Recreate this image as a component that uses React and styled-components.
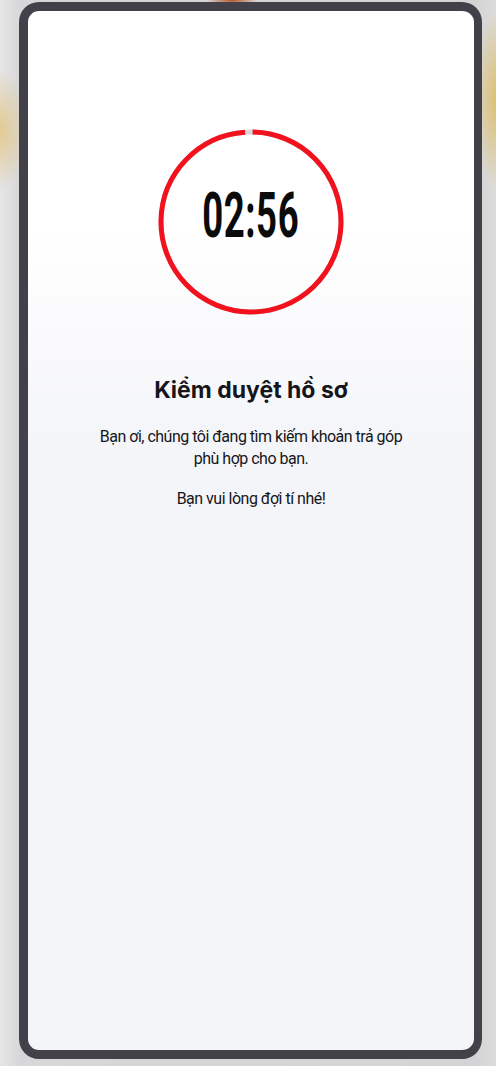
import React from "react";
import styled, { createGlobalStyle } from "styled-components";

const Global = createGlobalStyle`
  html, body {
    margin: 0;
    height: 100%;
  }
  body {
    background:
      radial-gradient(ellipse 30px 60px at 0px 130px, rgba(226, 190, 110, 0.7), transparent),
      radial-gradient(ellipse 22px 90px at 496px 100px, rgba(222, 186, 90, 0.85), transparent),
      radial-gradient(ellipse 26px 8px at 232px 0px, #b4582a, transparent),
      linear-gradient(90deg, #e6e6e6 0%, #d7d7d9 4%, #d4d4d6 96%, #dcdcdc 100%);
    font-family: "Inter", "Roboto", sans-serif;
  }
`;

const Page = styled.div`
  box-sizing: border-box;
  height: 1066px;
  padding: 2px 14px 7px 19px;
`;

const Frame = styled.div`
  box-sizing: border-box;
  height: 100%;
  border: 9px solid #42414a;
  border-right-width: 8px;
  border-radius: 20px;
  overflow: hidden;
  background: linear-gradient(180deg, #ffffff 0%, #ffffff 21%, #f4f5f9 42%, #f4f5f9 100%);
  display: flex;
  flex-direction: column;
  align-items: center;
  padding-top: 116px;
`;

const Ring = styled.div`
  position: relative;
  width: 190px;
  height: 190px;
  display: flex;
  align-items: center;
  justify-content: center;
`;

const RingSvg = styled.svg`
  position: absolute;
  inset: 0;
`;

const Time = styled.div`
  font-family: "Roboto", sans-serif;
  font-weight: 700;
  font-size: 63px;
  line-height: 1;
  color: #0b0b0b;
  transform: translateY(-7px) scaleX(0.58);
  letter-spacing: 1px;
`;

const Title = styled.h2`
  margin: 59px 0 0;
  font-family: "Inter", sans-serif;
  font-weight: 700;
  font-size: 23px;
  line-height: 28px;
  color: #15151a;
`;

const Text = styled.p`
  margin: ${(p) => p.$gap || 0}px 0 0;
  font-family: "Roboto", sans-serif;
  font-size: 16px;
  line-height: 22px;
  letter-spacing: -0.5px;
  color: #16161a;
  text-align: center;
  width: 330px;
`;

function Countdown({ progress, label }) {
  const r = 90;
  const c = 2 * Math.PI * r;
  return (
    <Ring>
      <RingSvg width="190" height="190" viewBox="0 0 190 190">
        <circle cx="95" cy="95" r={r} fill="none" stroke="#d8d8d8" strokeWidth="5" />
        <circle
          cx="95"
          cy="95"
          r={r}
          fill="none"
          stroke="#f2121e"
          strokeWidth="5"
          strokeDasharray={`${c * progress} ${c}`}
          transform="rotate(-89 95 95)"
        />
      </RingSvg>
      <Time>{label}</Time>
    </Ring>
  );
}

export default function App() {
  return (
    <>
      <Global />
      <Page>
        <Frame>
          <Countdown progress={0.985} label="02:56" />
          <Title>Kiểm duyệt hồ sơ</Title>
          <Text $gap={22}>
            Bạn ơi, chúng tôi đang tìm kiếm khoản trả góp phù hợp cho bạn.
          </Text>
          <Text $gap={18}>Bạn vui lòng đợi tí nhé!</Text>
        </Frame>
      </Page>
    </>
  );
}
